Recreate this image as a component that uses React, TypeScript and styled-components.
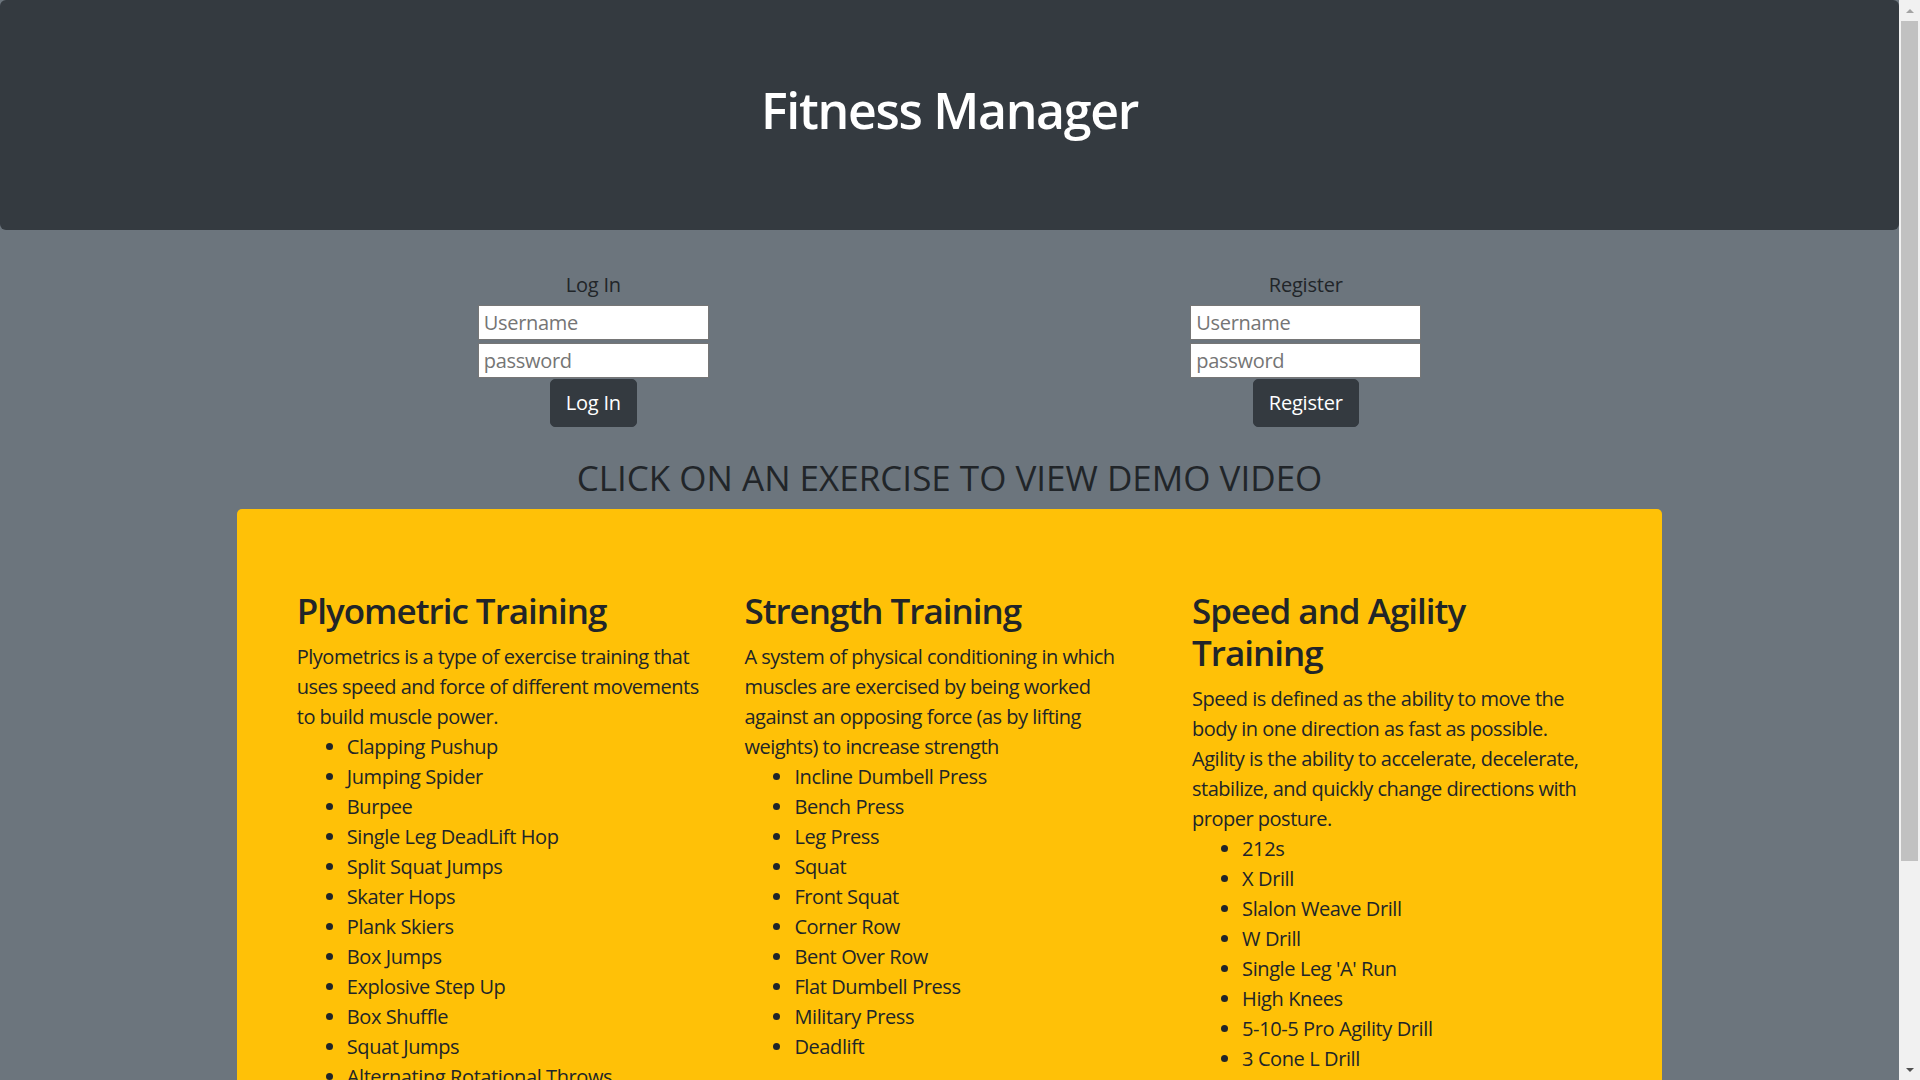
import React from "react";
import styled, { createGlobalStyle } from "styled-components";

const GlobalStyle = createGlobalStyle`
  html {
    scrollbar-width: none;
  }
  html::-webkit-scrollbar, body::-webkit-scrollbar {
    display: none;
    width: 0;
  }
  html, body {
    margin: 0;
    padding: 0;
  }
  body {
    margin-right: 21px;
    background: #6c757d;
    color: #212529;
    font-family: "Open Sans", "Noto Sans", "Liberation Sans", sans-serif;
    font-size: 20px;
    line-height: 30px;
  }
  *, *::before, *::after { box-sizing: border-box; }
`;

const Page = styled.div`
  padding-bottom: 163px;
`;

const Jumbotron = styled.header`
  background: #343a40;
  border-radius: 6px;
  padding: 80px 40px;
  margin-bottom: 40px;
`;

const Title = styled.h1`
  margin: 0 0 10px;
  color: #ffffff;
  font-size: 50px;
  line-height: 60px;
  font-weight: 600;
  text-align: center;
  letter-spacing: -1.3px;
`;

const Container = styled.main`
  width: 1425px;
  margin: 0 auto;
`;

const AuthRow = styled.div`
  display: grid;
  grid-template-columns: 1fr 1fr;
`;

const AuthForm = styled.form`
  display: flex;
  flex-direction: column;
  align-items: center;
`;

const FormTitle = styled.div`
  font-size: 20px;
  line-height: 30px;
  margin-bottom: 5px;
  color: #212529;
  letter-spacing: -0.2px;
`;

const Input = styled.input`
  display: block;
  width: 231px;
  height: 35px;
  margin: 0;
  padding: 1px 5px;
  border: 1px solid #767676;
  background: #ffffff;
  font-family: "Open Sans", "Noto Sans", sans-serif;
  font-size: 20px;
  letter-spacing: -0.3px;
  color: #212529;
  outline: none;
  & + & {
    margin-top: 3px;
  }
  &::placeholder {
    color: #757575;
  }
`;

const Button = styled.button`
  margin-top: 1px;
  padding: 8px 15px;
  border: 1px solid #343a40;
  border-radius: 5px;
  background: #343a40;
  color: #ffffff;
  font-family: "Open Sans", "Noto Sans", sans-serif;
  font-size: 20px;
  line-height: 30px;
  letter-spacing: -0.2px;
  cursor: pointer;
`;

const SectionHeading = styled.h3`
  margin: 30px 0 10px;
  font-size: 35px;
  line-height: 42px;
  font-weight: 400;
  text-align: center;
  color: #212529;
  letter-spacing: 0;
`;

const Card = styled.section`
  background: #ffc107;
  border-radius: 5px;
  padding: 81px 59.75px 79px;
  display: grid;
  grid-template-columns: repeat(3, 1fr);
  column-gap: 37.5px;
  align-items: start;
`;

const Column = styled.div``;

const ColumnTitle = styled.h3`
  margin: 0 0 10px;
  font-size: 35px;
  line-height: 42px;
  font-weight: 600;
  color: #212529;
  letter-spacing: -1px;
`;

const Description = styled.div`
  margin: 0;
  font-size: 20px;
  line-height: 30px;
  letter-spacing: -0.5px;
`;

const ExerciseList = styled.ul`
  margin: 0;
  padding-left: 50px;
`;

const Exercise = styled.li`
  font-size: 20px;
  line-height: 30px;
  letter-spacing: -0.4px;
  cursor: pointer;
`;

/* Fake browser scrollbar overlaid on the right edge */
const ScrollTrack = styled.div`
  position: fixed;
  top: 0;
  right: 0;
  width: 21px;
  height: 100vh;
  background: #f1f1f1;
  display: flex;
  flex-direction: column;
`;

const ScrollArrow = styled.div<{ $dir: "up" | "down" }>`
  height: 21px;
  flex: none;
  display: flex;
  align-items: center;
  justify-content: center;
  &::before {
    content: "";
    width: 0;
    height: 0;
    border-left: 4.5px solid transparent;
    border-right: 4.5px solid transparent;
    ${(p) =>
      p.$dir === "up"
        ? "border-bottom: 4.5px solid #a3a3a3;"
        : "border-top: 4.5px solid #505050;"}
  }
`;

const ScrollThumb = styled.div`
  height: 840px;
  margin: 0 2px;
  background: #c1c1c1;
  flex: none;
`;

const ScrollSpacer = styled.div`
  flex: 1;
`;

type Training = {
  title: string;
  description: string;
  exercises: string[];
};

const trainings: Training[] = [
  {
    title: "Plyometric Training",
    description:
      "Plyometrics is a type of exercise training that uses speed and force of different movements to build muscle power.",
    exercises: [
      "Clapping Pushup",
      "Jumping Spider",
      "Burpee",
      "Single Leg DeadLift Hop",
      "Split Squat Jumps",
      "Skater Hops",
      "Plank Skiers",
      "Box Jumps",
      "Explosive Step Up",
      "Box Shuffle",
      "Squat Jumps",
      "Alternating Rotational Throws",
    ],
  },
  {
    title: "Strength Training",
    description:
      "A system of physical conditioning in which muscles are exercised by being worked against an opposing force (as by lifting weights) to increase strength",
    exercises: [
      "Incline Dumbell Press",
      "Bench Press",
      "Leg Press",
      "Squat",
      "Front Squat",
      "Corner Row",
      "Bent Over Row",
      "Flat Dumbell Press",
      "Military Press",
      "Deadlift",
    ],
  },
  {
    title: "Speed and Agility Training",
    description:
      "Speed is defined as the ability to move the body in one direction as fast as possible. Agility is the ability to accelerate, decelerate, stabilize, and quickly change directions with proper posture.",
    exercises: [
      "212s",
      "X Drill",
      "Slalon Weave Drill",
      "W Drill",
      "Single Leg 'A' Run",
      "High Knees",
      "5-10-5 Pro Agility Drill",
      "3 Cone L Drill",
    ],
  },
];

export default function App() {
  return (
    <Page>
      <GlobalStyle />
      <Jumbotron>
        <Title>Fitness Manager</Title>
      </Jumbotron>
      <Container>
        <AuthRow>
          <AuthForm onSubmit={(e) => e.preventDefault()}>
            <FormTitle>Log In</FormTitle>
            <Input type="text" placeholder="Username" />
            <Input type="password" placeholder="password" />
            <Button type="submit">Log In</Button>
          </AuthForm>
          <AuthForm onSubmit={(e) => e.preventDefault()}>
            <FormTitle>Register</FormTitle>
            <Input type="text" placeholder="Username" />
            <Input type="password" placeholder="password" />
            <Button type="submit">Register</Button>
          </AuthForm>
        </AuthRow>
        <SectionHeading>CLICK ON AN EXERCISE TO VIEW DEMO VIDEO</SectionHeading>
        <Card>
          {trainings.map((t) => (
            <Column key={t.title}>
              <ColumnTitle>{t.title}</ColumnTitle>
              <Description>{t.description}</Description>
              <ExerciseList>
                {t.exercises.map((ex) => (
                  <Exercise key={ex}>{ex}</Exercise>
                ))}
              </ExerciseList>
            </Column>
          ))}
        </Card>
      </Container>
      <ScrollTrack aria-hidden="true">
        <ScrollArrow $dir="up" />
        <ScrollThumb />
        <ScrollSpacer />
        <ScrollArrow $dir="down" />
      </ScrollTrack>
    </Page>
  );
}
